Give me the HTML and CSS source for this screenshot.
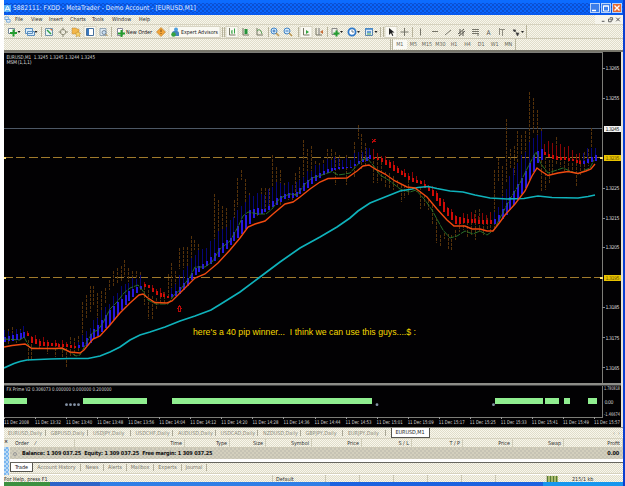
FILE: index.html
```html
<!DOCTYPE html>
<html lang="en">
<head>
    <meta charset="UTF-8">
    <meta name="viewport" content="width=device-width, initial-scale=1.0">
    <title>MetaTrader - Demo Account</title>
    <link rel="stylesheet" href="styles.css">
</head>
<body>
    <div class="window">
        <header class="titlebar">
            <svg class="logo" viewBox="0 0 8 8"><rect width="8" height="8" fill="#5cb3f5"/><path d="M1 7L4 1l3 6M2 5h4" fill="none" stroke="#fff"/></svg>
            <span class="title">5882111: FXDD - MetaTrader - Demo Account - [EURUSD,M1]</span>
            <div class="controls">
                <svg viewBox="0 0 10 10"><path d="M2 7.5h4" stroke="#fff" stroke-width="1.5"/></svg>
                <svg viewBox="0 0 10 10"><path d="M2.5 3h5v5h-5zM2 3h6" fill="none" stroke="#fff"/></svg>
                <svg class="close" viewBox="0 0 10 10"><path d="M2.5 2.5l5 5M7.5 2.5l-5 5" stroke="#fff" stroke-width="1.4"/></svg>
            </div>
        </header>
        <nav class="menu">
            <svg class="logo" viewBox="0 0 8 8"><path d="M1 1h4v3H1zM3 4h4v3H3z" fill="#e8f3fc" stroke="#6fa3d8"/></svg>
            <span class="item-file">File</span>
            <span class="item-view">View</span>
            <span class="item-insert">Insert</span>
            <span class="item-charts">Charts</span>
            <span class="item-tools">Tools</span>
            <span class="item-window">Window</span>
            <span>Help</span>
            <svg class="child-controls" viewBox="0 0 28 10"><path d="M6 7h3M22 3l4 4M26 3l-4 4" stroke="#555" stroke-width="1.1"/><path d="M13.500 4.500h3v3h-3zM15 3h3v3" fill="none" stroke="#555"/></svg>
        </nav>
        <div class="toolbar">
            <svg viewBox="4 25 618 14">
                <!-- pressed buttons -->
                <g fill="#faf9f2" stroke="#c6c2ac" stroke-width=".6">
                    <rect x="84" y="26.500" width="12" height="11"/>
                    <rect x="169" y="26.500" width="51" height="11"/>
                    <rect x="226" y="26.500" width="12" height="11"/>
                    <rect x="300" y="26.500" width="12" height="11"/>
                    <rect x="385" y="26.500" width="12" height="11"/>
                </g>
                <path d="M41.500 27v10M111.500 27v10M222.500 27v10M224.500 27v10M268.500 27v10M298.500 27v10M327.500 27v10M380.500 27v10M383.500 27v10M412.500 27v10M526.500 25v13" stroke="#b8b49c"/>
                <!-- carets -->
                <path d="M17.500 31h3l-1.500 2zM34.500 31h3l-1.500 2zM340 31h3l-1.500 2zM357 31h3l-1.500 2zM374.500 31h3l-1.500 2zM521 31h3l-1.500 2z" fill="#222"/>
                <!-- new chart, profiles -->
                <path d="M8.500 28.500h6v5h-6z" fill="#fff" stroke="#789"/>
                <path d="M13.500 29.500v7M10 33h7" stroke="#239d2e" stroke-width="2"/>
                <path d="M25.500 28.500h7v5h-7zM27.500 31.500h7v4h-7z" fill="#d9ecfa" stroke="#5c8fbe"/>
                <!-- market watch, data window, navigator -->
                <path d="M45.500 28.500h7v7h-7z" fill="#e7f3f7" stroke="#7593a8"/><path d="M47 30l4 4" stroke="#2c9f41" stroke-width="1.5"/><path d="M50 29h2v2z" fill="#e07030"/>
                <circle cx="63" cy="32" r="2.700" fill="none" stroke="#999884"/><path d="M63 27.500v3M63 34v3M58.500 32h3M65 32h3" stroke="#888773"/>
                <path d="M72 28h4l1 1h2v5h-7z" fill="#f3b749" stroke="#b88639" stroke-width=".5"/><path d="M78 31l1 2 2 .3-1.500 1.500.5 2-2-1-2 1 .5-2-1.500-1.500 2-.3z" fill="#f7d269" stroke="#bd8a28" stroke-width=".5"/>
                <path d="M86.500 28.500h7v7h-7z" fill="#fff" stroke="#456f9d"/><path d="M88 29v6" stroke="#3978c0" stroke-width="2"/>
                <path d="M100 28.500h6v7h-6z" fill="#e2edf5" stroke="#8197aa" stroke-width=".8"/><circle cx="104" cy="32.500" r="2" fill="#c8dff5" stroke="#567" stroke-width=".7"/><path d="M105.500 34l2 2" stroke="#a78444"/>
                <!-- new order -->
                <path d="M117.500 28.500h5v7h-5z" fill="#fff" stroke="#889"/><path d="M121.500 30v7M118 33.500h7" stroke="#239d2e" stroke-width="2"/>
                <text x="126" y="34" textLength="26" lengthAdjust="spacingAndGlyphs">New Order</text>
                <path d="M161 27.500l4.500 4.500-4.500 4.500-4.500-4.500z" fill="#f2a437" stroke="#b97722" stroke-width=".6"/><path d="M161 29.500v2.500M161 33v1" stroke="#7b4812"/>
                <circle cx="176" cy="29.500" r="2" fill="#4d9ede"/><path d="M172 33c0-3 7-3 7 0v3h-7z" fill="#4784bd"/><circle cx="173.500" cy="34.500" r="2.300" fill="#36a33d"/>
                <text x="181" y="34" textLength="37" lengthAdjust="spacingAndGlyphs">Expert Advisors</text>
                <!-- chart types -->
                <g fill="none">
                    <path d="M229.500 28v7h6M243 28v7h6M257 28v7h6M303.500 28v7h6M316 28v7h6" stroke="#777765"/>
                    <path d="M232 30v4M234.500 28.500v5M231 32h1" stroke="#35a444"/>
                    <path d="M246 29v5" stroke="#25933a" stroke-width="3"/>
                    <path d="M257 31l2-1.500 2 1.500 1 3" stroke="#5a9b54"/>
                    <circle cx="274" cy="31" r="3" fill="#d5ebfb" stroke="#4384c6"/><path d="M276 33l3 3" stroke="#bd9852" stroke-width="1.600"/><path d="M272.500 31h3M274 29.500v3" stroke="#3473bb"/>
                    <circle cx="287" cy="31" r="3" fill="#d5ebfb" stroke="#4384c6"/><path d="M289 33l3 3" stroke="#bd9852" stroke-width="1.600"/><path d="M285.500 31h3" stroke="#3473bb"/>
                    <path d="M306 30l3 2-3 2z" fill="#31a33e"/>
                    <path d="M319 28v7" stroke="#777"/><path d="M320 32l3-2v4z" fill="#c66c38"/>
                    <path d="M332 28.500h5v6h-5z" fill="#f1f1e8" stroke="#888"/><path d="M336.500 30.500v6M333.500 33.500h6" stroke="#259e31" stroke-width="2"/>
                    <circle cx="352" cy="32" r="3.600" fill="#fff" stroke="#2f79c9" stroke-width="1.800"/><path d="M352 30v2h2" stroke="#35506e" stroke-width=".7"/>
                    <path d="M365.500 28.500h7v7h-7z" fill="#dcebf8" stroke="#5c86ad"/><path d="M365 29h8M367 32h4" stroke="#4388ca" stroke-width="1.300"/><path d="M367 34h4" stroke="#47a44c"/>
                </g>
                <!-- drawing tools -->
                <path d="M389 28v7l2-2 1.300 3 1-.5-1.300-3h2.500z" fill="#222"/>
                <g fill="none" stroke="#77766a">
                    <path d="M404.500 28v8M400.500 32h8M420.500 28.500v7M432 31.500h6M445 35l6-5"/>
                    <path d="M458 34l6-5M459 36l6-5M460 29v5M463 31v5" stroke="#58574f"/>
                    <path d="M472 29.500h7M472 31.500h7M472 33.500h7M478 33v3"/>
                    <path d="M500 29.500h5M502.500 30v6M499.500 28v7" stroke-width=".8"/>
                </g>
                <text class="glyph" x="486.500" y="34.500">A</text>
                <path d="M513 30h3l-1.500 2zM516 33h3l-1.500 3zM513.500 29l4 5" fill="#333" stroke="#444" stroke-width=".6"/>
            </svg>
        </div>
        <div class="periods">
            <div class="period-bar">
                <span class="active">M1</span><span>M5</span><span>M15</span><span>M30</span><span>H1</span><span>H4</span><span>D1</span><span>W1</span><span>MN</span>
            </div>
        </div>

        <main class="chart">
            <svg id="chart" viewBox="4 52 617 375">
                <path class="quote" d="M4 128.500h598"/>
                <path class="level" d="M4 157.500h598M4 277.500h598"/>
                <g id="wicks"></g>
                <g id="bars"></g>
                <g id="lines"></g>
                <path class="signal" d="M372 139l3.500 3.500M375.500 139l-3.500 3.500M371.500 141h4"/>
                <path class="signal" d="M179.500 306l-2 2.500h1v3h2v-3h1z"/>
                <text x="6.500" y="58.500" textLength="88.500" lengthAdjust="spacingAndGlyphs">EURUSD,M1&#160; 1.3245 1.3245 1.3244 1.3245</text>
                <text x="6.500" y="64" textLength="25">MSM (1,1,1)</text>
                <text class="note" x="193" y="335" textLength="223" lengthAdjust="spacingAndGlyphs">here's a 40 pip winner...&#160; I think we can use this guys....$ :</text>
                <!-- indicator window -->
                <path class="frame" d="M4 52.500h598.500V417.500H4"/>
                <path d="M4 383.500h617" stroke="#8c8c88" stroke-width="2"/>
                <path d="M4 385.500h617" stroke="#444"/>
                <text x="6.500" y="390.500" textLength="105" lengthAdjust="spacingAndGlyphs">FX Prime V2 0.306073 0.000000 0.000000 0.200000</text>
                <g id="blocks"></g>
                <g id="axis"></g>
            </svg>
        </main>

        <div class="chart-tabs">
            <span>EURUSD,Daily</span>
            <span>GBPUSD,Daily</span>
            <span>USDJPY,Daily</span>
            <span>USDCHF,Daily</span>
            <span>AUDUSD,Daily</span>
            <span>USDCAD,Daily</span>
            <span>NZDUSD,Daily</span>
            <span>GBPJPY,Daily</span>
            <span>EURJPY,Daily</span>
            <span class="active">EURUSD,M1</span>
            <span class="scroll">&#8249;&#160; &#8250;</span>
        </div>

        <section class="terminal">
            <div class="terminal-side"><b>×</b><i></i></div>
            <div class="terminal-main">
                <div class="columns">
                    <span class="first">Order&#160;&#160;&#160; ⁄</span>
                    <span>Time</span>
                    <span>Type</span>
                    <span>Size</span>
                    <span>Symbol</span>
                    <span>Price</span>
                    <span>S / L</span>
                    <span>T / P</span>
                    <span>Price</span>
                    <span>Swap</span>
                    <span>Profit</span>
                </div>
                <div class="balance">
                    <i></i>
                    <b>Balance: 1 309 037.25&#160; Equity: 1 309 037.25&#160; Free margin: 1 309 037.25</b>
                    <b class="profit">0.00</b>
                </div>
                <div class="terminal-tabs">
                    <span class="active">Trade</span>
                    <span>Account History</span>
                    <span>News</span>
                    <span>Alerts</span>
                    <span>Mailbox</span>
                    <span>Experts</span>
                    <span>Journal</span>
                </div>
            </div>
        </section>

        <footer class="status">
            <span>For Help, press F1</span>
            <span>Default</span>
            <span></span>
            <span></span>
            <span></span>
            <span></span>
            <span></span>
            <span></span>
            <i class="signal-bars"></i>
            <span class="traffic">215/1 kb</span>
        </footer>
        <div class="taskbar"><i class="start"></i><i class="task"></i><i class="tasks"></i><i class="tray"></i></div>
    </div>
    <script src="chart.js"></script>
</body>
</html>
```

FILE: styles.css
```css
body {
    margin: 0;
    width: 625px;
    height: 486px;
    overflow: hidden;
    background-color: #fff;
    font-family: "DejaVu Sans Condensed", "DejaVu Sans", sans-serif;
    font-size: 5.4px;
    line-height: 1;
    color: #333;
}
.window {
    box-sizing: border-box;
    width: 621px;
    height: 486px;
    margin-left: 4px;
    border-right: 2px solid #0a3fd0;
    display: flex;
    flex-direction: column;
}
.window > * {
    box-sizing: border-box;
    flex: none;
}
svg {
    display: block;
}
span {
    white-space: nowrap;
}
/* dithered panel colour shared by all bars */
.menu, .toolbar, .periods, .chart-tabs, .columns, .terminal-tabs, .status {
    background: repeating-conic-gradient(#f8f6ec 0 25%, #e0ddca 0 50%) 0 0 / 2px 2px;
}
.titlebar {
    height: 15px;
    display: flex;
    align-items: center;
    background: repeating-conic-gradient(#0b50d2 0 25%, #0a66fc 0 50%) 0 3px / 4px 4px;
    border-top: 3px solid #0c6cff;
    border-bottom: 2px solid #0759ee;
}
.logo {
    width: 7px;
    height: 7px;
}
.title {
    margin-left: 2px;
    font-size: 6.5px;
    letter-spacing: 0.07px;
    color: #e6f0ff;
}
.controls {
    margin-left: auto;
    padding-right: 1px;
    display: flex;
    gap: 1px;
}
.controls svg {
    width: 10px;
    height: 10px;
    background-color: #3c7fea;
    outline: 1px solid #b8d3fa;
    outline-offset: -1px;
}
.controls .close {
    background-color: #e46a33;
}
.menu {
    height: 10px;
    display: flex;
    align-items: center;
    border-bottom: 1px solid #d6d2bf;
}
.menu .logo {
    margin-right: 4px;
}
.item-file {
    width: 16px;
}
.item-view {
    width: 18px;
}
.item-insert {
    width: 21px;
}
.item-charts {
    width: 22px;
}
.item-tools {
    width: 20px;
}
.item-window {
    width: 27px;
}
.child-controls {
    width: 28px;
    height: 9px;
    margin-left: auto;
    background-color: #f5f4ec;
}
.toolbar {
    height: 14px;
    border-bottom: 1px solid #ccc8b4;
}
.toolbar svg {
    width: 618px;
    height: 14px;
}
.toolbar text {
    font-size: 5.4px;
    fill: #222;
}
.toolbar .glyph {
    font-size: 6.5px;
    fill: #555;
}
.periods {
    height: 13px;
    border-bottom: 2px solid #77756a;
}
.period-bar {
    width: 126px;
    height: 11px;
    margin-left: 386px;
    display: flex;
    align-items: center;
    border-left: 3px double #b8b49c;
    border-right: 1px solid #b8b49c;
    box-sizing: border-box;
    color: #666559;
}
.period-bar span {
    width: 13.6px;
    text-align: center;
}
.period-bar .active {
    height: 9px;
    line-height: 9px;
    background-color: #fafaf5;
}
.chart {
    height: 375px;
    background-color: #020103;
    border-right: 2px solid #e7e4d6;
}
.chart svg {
    width: 617px;
    height: 375px;
    shape-rendering: crispEdges;
}
.chart text {
    font-size: 5.2px;
    fill: #d6d6d6;
}
.chart .note {
    font-family: "Liberation Sans", Arial, sans-serif;
    font-size: 8.2px;
    fill: #f5d800;
}
.chart .tag {
    fill: #222;
}
.chart .tag-gold {
    fill: #6b5300;
}
.quote {
    stroke: #4d5866;
}
.level {
    stroke: #a07a2c;
    stroke-dasharray: 9 3.3;
}
.frame {
    fill: none;
    stroke: #7d7d78;
}
.signal {
    fill: none;
    stroke: #b80808;
}
.wick {
    stroke: #55320a;
    stroke-dasharray: 3 1;
}
.ma {
    fill: none;
    shape-rendering: auto;
}
.dot {
    fill: #8592a6;
    shape-rendering: auto;
}
.chart-tabs {
    height: 12px;
    display: flex;
    align-items: flex-start;
    line-height: 10px;
    border-top: 1px solid #8d8b80;
    border-bottom: 1px solid #d6d2bf;
    padding-left: 4px;
    color: #8f8d80;
}
.chart-tabs span:not(.active):not(.scroll) {
    box-sizing: border-box;
    width: 42.5px;
    background: linear-gradient(#aaa796, #aaa796) right 5px top 2px / 1px 6px no-repeat;
}
.chart-tabs .active {
    width: 37px;
    height: 9px;
    line-height: 9px;
    text-align: center;
    background-color: #fff;
    color: #222;
    border: 1px solid #55544d;
    border-top: 0;
}
.chart-tabs .scroll {
    margin-left: auto;
    padding-right: 3px;
}
.terminal {
    height: 36px;
    display: flex;
}
.terminal-side {
    width: 6px;
    background-color: #eeeadd;
    display: flex;
    flex-direction: column;
}
.terminal-side b {
    height: 8px;
}
.terminal-side i {
    flex: 1;
    margin-right: 1px;
    background: repeating-conic-gradient(#79b5ef 0 25%, #b9d9f5 0 50%) 0 0 / 4px 4px;
}
.terminal-main {
    flex: 1;
    background-color: #fff;
}
.columns {
    height: 9px;
    line-height: 9px;
    display: grid;
    grid-template-columns: 65px 110px 45px 36px 46px 50px 50px 51px 50px 51px 1fr;
    border-bottom: 1px solid #cdc9b6;
    box-sizing: border-box;
}
.columns span {
    box-sizing: border-box;
    text-align: right;
    padding-right: 2px;
    border-right: 1px solid #cfccb9;
}
.columns .first {
    text-align: left;
    padding-left: 5px;
}
.balance {
    height: 11px;
    display: flex;
    align-items: center;
    background: repeating-conic-gradient(#d3cfbd 0 25%, #c6c3b4 0 50%) 0 0 / 4px 4px;
    color: #111;
    font-size: 5.5px;
    letter-spacing: -0.14px;
    white-space: nowrap;
}
.balance i {
    box-sizing: border-box;
    width: 4px;
    height: 4px;
    margin: 0 5px 0 3px;
    border: 1px solid #999;
    border-radius: 50%;
}
.profit {
    margin-left: auto;
    padding-right: 4px;
}
.terminal-tabs {
    height: 12px;
    margin-top: 3px;
    display: grid;
    grid-template-columns: 23px 48px 23px 23px 27px 28px 25px;
    line-height: 10px;
    border-top: 1px solid #66655e;
    border-bottom: 1px solid #d6d2bf;
    color: #7c7a6f;
    box-sizing: border-box;
}
.terminal-tabs span {
    text-align: center;
    border-right: 1px solid #b3af9c;
    height: 7px;
    line-height: 7px;
    margin-top: 1px;
}
.terminal-tabs .active {
    height: 8px;
    line-height: 9px;
    margin-top: 0;
    background-color: #fff;
    color: #222;
    border: 1px solid #55544d;
    border-top: 0;
}
.status {
    height: 7px;
    line-height: 8px;
    display: grid;
    grid-template-columns: 269px 53px repeat(5, 34px) 51px 11px 1fr;
}
.status span {
    box-sizing: border-box;
    border-right: 1px solid #cbc7b3;
}
.status span:nth-child(2) {
    padding-left: 3px;
}
.signal-bars {
    height: 6px;
    margin-top: 1px;
    background: repeating-linear-gradient(90deg, #557b36 0 1px, #a9b96b 1px 3px);
}
.status .traffic {
    margin-left: 14px;
    border: 0;
}
.taskbar {
    height: 4px;
    display: flex;
    background-color: #1c62e0;
}
.taskbar .start {
    width: 46px;
    background-color: #3c9040;
}
.taskbar .task {
    width: 50px;
    background-color: #2c63c8;
}
.taskbar .tasks {
    width: 230px;
    background-color: #2f7ee6;
}
.taskbar .tray {
    width: 80px;
    margin-left: auto;
    background-color: #1796ee;
}
```

FILE: chart.js
```js
const NS = "http://www.w3.org/2000/svg";
const STEP = 3.888;

function add(parent, tag, attrs, text) {
    const el = document.createElementNS(NS, tag);
    for (const key in attrs) el.setAttribute(key, attrs[key]);
    if (text) el.textContent = text;
    document.getElementById(parent).appendChild(el);
}

// [x, top of shadow, top of body, bottom of body]
const trend = [
    ["blue", [[5, 332, 337, 342], [25, 328, 332, 338]]],
    ["red", [[28, 331, 333, 336], [32, 334, 337, 343], [40, 338, 341, 346], [50, 341, 343, 346], [66, 342, 344, 347], [75, 344, 346, 348]]],
    ["blue", [[79, 341, 345, 348], [87, 330, 337, 346], [95, 320, 328, 338], [100, 314, 322, 334], [110, 301, 309, 324], [120, 289, 300, 311], [130, 280, 290, 300], [142, 277, 285, 288]]],
    ["red", [[147, 282, 284, 287], [152, 286, 288, 292], [160, 290, 293, 297], [168, 294, 296, 298]]],
    ["blue", [[171, 290, 294, 297], [178, 280, 289, 295], [185, 267, 281, 289], [195, 254, 268, 275], [205, 248, 263, 267], [213, 240, 255, 262], [222, 229, 243, 253], [230, 221, 238, 245], [240, 209, 223, 236], [248, 196, 211, 226], [255, 195, 208, 216], [266, 193, 209, 212], [275, 184, 199, 206], [285, 183, 194, 199], [297, 184, 192, 197], [305, 173, 182, 190], [313, 169, 176, 183], [325, 161, 170, 174], [337, 158, 167, 169], [350, 159, 167, 168], [360, 151, 160, 163], [370, 147, 155, 159]]],
    ["red", [[374, 151, 157, 159], [381, 154, 158, 161], [389, 159, 162, 168], [397, 166, 168, 173], [405, 170, 173, 177], [412, 174, 178, 182], [420, 178, 181, 184], [428, 184, 187, 191], [435, 190, 192, 199], [443, 199, 201, 211], [450, 209, 211, 218], [456, 215, 216, 224], [466, 214, 219, 223], [491, 214, 220, 224]]],
    ["blue", [[494, 213, 219, 224], [500, 202, 213, 221], [507, 186, 201, 214], [515, 165, 189, 204], [525, 152, 172, 189], [533, 138, 155, 173], [537, 133, 151, 163], [541, 132, 149, 160]]],
    ["red", [[544, 143, 151, 154], [551, 143, 155, 159], [562, 145, 157, 160], [572, 150, 159, 161], [580, 154, 161, 164]]],
    ["blue", [[583, 152, 161, 164], [590, 149, 158, 163], [596, 146, 155, 161]]]
];
const colors = {
    blue: ["#060678", "#2818e0"],
    red: ["#8a0505", "#cf0b06"]
};

function at(points, x) {
    let i = 1;
    while (i < points.length - 1 && points[i][0] < x) i++;
    const a = points[i - 1], b = points[i];
    const t = Math.min(1, Math.max(0, (x - a[0]) / (b[0] - a[0])));
    return a.map((v, k) => v + (b[k] - v) * t);
}

for (let i = 0; i < 153; i++) {
    const x = 4.5 + STEP * i;
    const part = trend.find(p => x <= p[1][p[1].length - 1][0] + 1.5);
    if (!part) continue;
    const p = at(part[1], x);
    const sx = Math.floor(x);
    const top = p[1] + (i * 7 % 5) - 2;
    add("bars", "rect", { x: sx, y: top, width: 1, height: p[3] - top, fill: colors[part[0]][0] });
    add("bars", "rect", { x: sx, y: p[2], width: 2, height: p[3] - p[2], fill: colors[part[0]][1] });
}

// high / low of each price bar
const wicks = [
    [8, 329, 344], [12, 327, 341], [16, 329, 343], [20, 329, 340], [28, 340, 361], [31, 340, 360], [39, 342, 350], [47, 345, 354], [55, 344, 357], [62, 346, 357], [66, 348, 368], [70, 337, 356], [74, 338, 356], [78, 336, 352],
    [82, 302, 340], [86, 295, 318], [90, 286, 312], [93, 286, 305], [97, 293, 319], [101, 291, 312], [105, 288, 304], [109, 280, 290], [113, 271, 286], [117, 268, 283], [121, 266, 281], [124, 260, 277], [128, 268, 282], [132, 271, 284], [136, 271, 282], [140, 272, 290],
    [144, 287, 305], [148, 290, 319], [152, 296, 319], [156, 298, 309], [160, 296, 304], [164, 292, 303], [168, 274, 296], [171, 263, 298], [175, 271, 288], [179, 248, 269], [183, 247, 268], [187, 247, 276], [191, 236, 260], [194, 240, 250], [198, 244, 272], [202, 258, 268], [206, 255, 266], [210, 242, 258],
    [214, 194, 250], [218, 200, 245], [222, 206, 238], [226, 208, 231], [230, 221, 240], [234, 200, 218], [237, 178, 207], [241, 170, 180], [245, 179, 206], [249, 193, 211], [253, 198, 216], [257, 205, 217], [261, 188, 213], [265, 188, 212], [269, 188, 210], [272, 155, 200], [276, 167, 198], [280, 170, 205],
    [284, 183, 193], [288, 187, 200], [292, 185, 201], [295, 173, 197], [299, 167, 195], [303, 140, 190], [307, 149, 171], [311, 146, 180], [315, 161, 180], [319, 163, 178], [323, 160, 170], [327, 149, 170], [331, 149, 171], [335, 152, 185], [339, 155, 170], [346, 155, 185], [354, 142, 178], [358, 125, 139], [361, 134, 169], [365, 143, 165],
    [373, 153, 183], [377, 154, 183], [381, 158, 182], [385, 172, 188], [389, 173, 189], [393, 176, 190], [397, 180, 187], [401, 185, 202], [404, 185, 198], [408, 180, 195], [416, 187, 192], [420, 187, 209], [424, 195, 207], [428, 200, 210], [432, 205, 225], [436, 218, 243], [440, 235, 247], [444, 233, 239], [448, 234, 249], [451, 235, 251], [455, 230, 240], [459, 218, 232], [463, 217, 230], [467, 214, 238], [471, 222, 235], [475, 210, 240], [479, 209, 232], [483, 222, 235], [487, 218, 230], [490, 213, 231],
    [494, 170, 228], [498, 158, 182], [502, 166, 197], [506, 119, 182], [510, 149, 168], [514, 146, 175], [517, 131, 166], [521, 135, 154], [525, 131, 153], [529, 92, 142], [533, 98, 134], [537, 110, 136], [541, 128, 191], [545, 157, 190], [549, 160, 184], [552, 148, 176], [556, 137, 165], [560, 146, 167], [564, 153, 171], [568, 155, 171], [572, 163, 172], [576, 163, 186], [580, 160, 175], [584, 152, 170], [588, 149, 166], [591, 128, 160]
];
wicks.forEach(w => add("wicks", "path", { class: "wick", d: `M${w[0] + 0.5} ${w[1]}V${w[2]}` }));

function line(color, width, points, dash) {
    add("lines", "polyline", { class: "ma", points, stroke: color, "stroke-width": width, "stroke-dasharray": dash || "none" });
}
line("#2c7a2c", 0.9, "4,339 20,340 24,337 30,348 62,349 70,352 76,356 80,355 88,340 93,332 98,330 103,323 110,309 117,302 124,293 130,288 138,285 143,291 148,300 156,304 168,304 174,295 180,290 190,277 195,267 205,267 212,262 220,249 230,241 238,227 243,216 248,212 258,214 266,214 272,209 280,198 290,194 297,195 305,184 312,178 325,174 332,171.5 338,175 345,174 350,173 362,160 367,158 373,165 380,175 390,181 400,189 410,192 416,190 425,200 432,210 438,221 443,230 450,238 457,236 465,231 473,234 480,231 487,235 494,230 500,218 510,199 520,183 530,163 536,152 541,164 548,173 557,170 563,168 570,171 578,174 585,170 590,168 594,160", "6 1");
line("#0fb2bb", 1.7, "4,368 14,363.5 20,361.5 27,360 50,359 70,358.5 88,358.5 100,356 110,352 120,347 130,340 140,335 150,332 165,327 180,321 195,316 211,310 220,304.5 240,292 260,277 280,262 300,248 320,237 337,227 350,218 358,211 370,203 385,197 400,191 412,189 418,187.5 428,186.5 437,188.5 450,191 463,192 475,195 490,198 507,199 524,198.5 532,197 538,196 552,197.5 578,198 588,196.5 595,195");
line("#f04a10", 1.4, "4,347 12,345.5 25,344 32,348.5 55,348.5 62,348 70,352 80,353 84,350 93,339 100,336 110,325 120,313 130,303 139,295 143,294 148,298 155,302.5 167,303 172,301 182,291 195,278 205,274 218,263 230,250 240,238 248,227 255,224 265,221 273,214 285,204 293,202 300,197 310,189 320,182 328,178.5 347,178 357,171 363,166 369,165 375,169 385,174 395,181 407,187 415,188 427,197 437,209 447,220 454,226 465,226 472,229 480,229 487,231 493,231 500,222 505,215 515,204 525,191 532,176 537,168 541,171 548,175.5 558,173 568,171.5 578,173.5 586,171 591,169 595,164");

// FX Prime blocks and dots
[[4, 27], [83, 147], [172, 372], [495, 543], [545, 559], [564, 570], [588, 597]].forEach(b =>
    add("blocks", "rect", { x: b[0], y: 398, width: b[1] - b[0], height: 6, fill: "#90ee90" }));
[66.500, 70.500, 74.500, 78.500, 377, 493.500].forEach(x =>
    add("blocks", "circle", { class: "dot", cx: x, cy: 404.7, r: 1.4 }));

// price scale
[["1.3265", 68], ["1.3255", 98], ["1.3225", 188], ["1.3215", 218], ["1.3205", 247], ["1.3185", 307], ["1.3175", 337.5], ["1.3165", 367.5]].forEach(p => {
    add("axis", "path", { d: `M602 ${p[1]}h3`, stroke: "#888" });
    add("axis", "text", { x: 605.5, y: p[1] + 2, textLength: 14 }, p[0]);
});
[["1.3245", 128.5, "#f2f2f2", "tag"], ["1.3235", 157.5, "#e8c200", "tag-gold"], ["1.3195", 277.5, "#e8c200", "tag-gold"]].forEach(p => {
    add("axis", "rect", { x: 604, y: p[1] - 3, width: 17, height: 6, fill: p[2] });
    add("axis", "text", { class: p[3], x: 605.5, y: p[1] + 2, textLength: 14 }, p[0]);
});
[157.500, 277.500].forEach(y =>
    add("axis", "path", { d: `M4 ${y - 1}h2v2h-2zM600 ${y - 1}h3v2h-3z`, fill: "#ffe27a" }));
add("axis", "text", { x: 604, y: 389.5, textLength: 16, lengthAdjust: "spacingAndGlyphs" }, "1.780818");
add("axis", "text", { x: 604.5, y: 404, textLength: 9 }, "0.00");
add("axis", "text", { x: 604, y: 416, textLength: 16, lengthAdjust: "spacingAndGlyphs" }, "-1.46674");

// time scale
["11 Dec 2008", "11 Dec 13:32", "11 Dec 13:40", "11 Dec 13:48", "11 Dec 13:56", "11 Dec 14:04", "11 Dec 14:12", "11 Dec 14:20", "11 Dec 14:28", "11 Dec 14:36", "11 Dec 14:44", "11 Dec 14:53", "11 Dec 15:01", "11 Dec 15:09", "11 Dec 15:17", "11 Dec 15:25", "11 Dec 15:33", "11 Dec 15:41", "11 Dec 15:49", "11 Dec 15:57"].forEach((t, i) => {
    const x = 4 + 31.05 * i;
    add("axis", "path", { d: `M${x + 0.5} 417v2`, stroke: "#999" });
    add("axis", "text", { x, y: 424, textLength: i ? 26 : 25, lengthAdjust: "spacingAndGlyphs" }, t);
});
```
